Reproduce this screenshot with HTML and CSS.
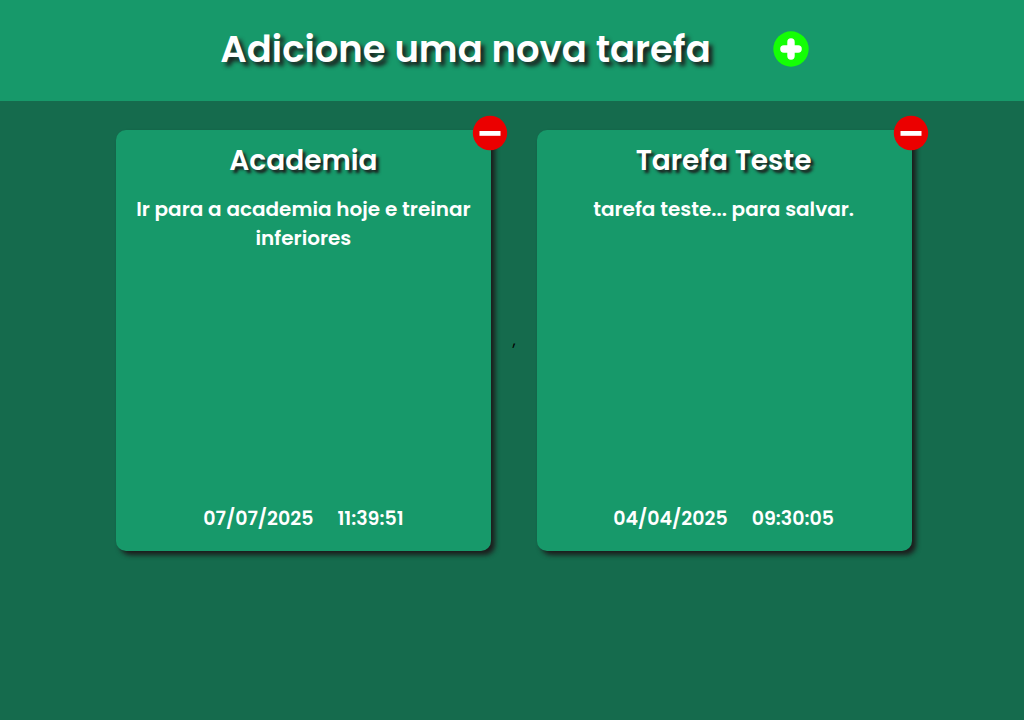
FILE: index.html
```html
<!DOCTYPE html>
<html lang="pt-BR">
<head>
    <meta charset="UTF-8">
    <meta name="viewport" content="width=device-width, initial-scale=1.0">
    <title>Tarefas</title>
    <link rel="stylesheet" href="styles.css">
</head>
<body>
    <header class="header">
        <h1>Adicione uma nova tarefa</h1>
        <button class="add-button" type="button" aria-label="Adicionar tarefa">
            <svg viewBox="0 0 36 36" width="36" height="36">
                <circle cx="18" cy="18" r="17.7" fill="#14ff05"/>
                <path d="M18 10.9v14.2M10.9 18h14.2" stroke="#fff" stroke-width="7.4" stroke-linecap="round"/>
            </svg>
        </button>
    </header>

    <main class="tasks">
        <article class="card">
            <button class="remove-button" type="button" aria-label="Remover Academia">
                <svg viewBox="0 0 36 36" width="36" height="36">
                    <circle cx="18" cy="18" r="17.2" fill="#eb0000"/>
                    <rect x="7.5" y="16" width="21" height="4.8" fill="#fff"/>
                </svg>
            </button>
            <h2>Academia</h2>
            <p class="description">Ir para a academia hoje e treinar inferiores</p>
            <div class="date">
                <span>07/07/2025</span>
                <span>11:39:51</span>
            </div>
        </article>
        ,
        <article class="card">
            <button class="remove-button" type="button" aria-label="Remover Tarefa Teste">
                <svg viewBox="0 0 36 36" width="36" height="36">
                    <circle cx="18" cy="18" r="17.2" fill="#eb0000"/>
                    <rect x="7.5" y="16" width="21" height="4.8" fill="#fff"/>
                </svg>
            </button>
            <h2>Tarefa Teste</h2>
            <p class="description">tarefa teste... para salvar.</p>
            <div class="date">
                <span>04/04/2025</span>
                <span>09:30:05</span>
            </div>
        </article>
    </main>
</body>
</html>
```

FILE: styles.css
```css
* {
    margin: 0;
    padding: 0;
    box-sizing: border-box;
}
body {
    font-family: Poppins, Inter, sans-serif;
    background-color: #156b4d;
}
button {
    border: none;
    background: none;
    cursor: pointer;
}
svg {
    display: block;
    fill: none;
}
.header {
    display: flex;
    justify-content: center;
    align-items: center;
    gap: 62px;
    min-height: 101px;
    padding: 20px 0 23px 5px;
    background-color: #17996a;
    color: white;
}
h1 {
    font-size: 37px;
    font-weight: 600;
    line-height: 58px;
    text-shadow: 4px 4px 4px #1c1c1c;
}
.tasks {
    display: flex;
    flex-wrap: wrap;
    justify-content: center;
    align-items: center;
    gap: 21px;
    padding: 29px 0 29px 4px;
    font-size: 16px;
}
.card {
    position: relative;
    display: flex;
    flex-direction: column;
    width: 375px;
    min-height: 421px;
    padding: 10px 16px 18px 15px;
    border-radius: 10px;
    background-color: #17996a;
    box-shadow: 4px 4px 5px #1c1c1c;
    color: white;
    text-align: center;
}
.remove-button {
    position: absolute;
    top: -15px;
    right: -17px;
}
h2 {
    font-size: 28px;
    font-weight: 600;
    line-height: 42px;
    text-shadow: 3px 3px 3px #1c1c1c;
}
.description {
    margin-top: 13px;
    font-size: 20px;
    font-weight: 600;
    line-height: 29px;
}
.date {
    display: flex;
    justify-content: center;
    gap: 24px;
    margin-top: auto;
    font-size: 19px;
    font-weight: 600;
    line-height: 29px;
}
```
